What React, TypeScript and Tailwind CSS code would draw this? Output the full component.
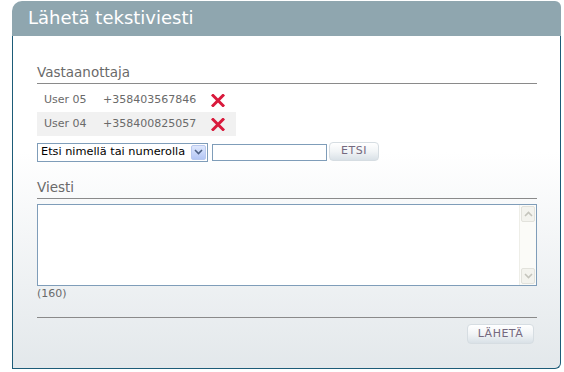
import { useState } from 'react';

const recipients = [
  { name: 'User 05', phone: '+358403567846' },
  { name: 'User 04', phone: '+358400825057' },
];

function RemoveIcon() {
  return (
    <svg width="14" height="13" viewBox="0 0 14 13" className="block">
      <path d="M2 1.5 L12 11.5 M12 1.5 L2 11.5" stroke="#d91a3c" strokeWidth="3" strokeLinecap="square" />
    </svg>
  );
}

function Chevron({ up }: { up?: boolean }) {
  return (
    <svg width="9" height="6" viewBox="0 0 9 6" className="block">
      <path d={up ? 'M1 5 L4.5 1.5 L8 5' : 'M1 1 L4.5 4.5 L8 1'} fill="none" stroke="currentColor" strokeWidth="1.6" />
    </svg>
  );
}

function SoftButton({ label, className }: { label: string; className: string }) {
  return (
    <button
      className={`flex items-center justify-center rounded-[4px] border border-[#d6dde2] bg-gradient-to-b from-[#ffffff] via-[#f1f4f6] to-[#d9e1e7] text-[11px] tracking-[0.5px] text-[#75697f] ${className}`}
    >
      {label}
    </button>
  );
}

export default function App() {
  const [rows] = useState(recipients);

  return (
    <div className="w-[564px] h-[372px] bg-white pt-px pl-[12px] font-['DejaVu_Sans',Verdana,sans-serif]">
      <div className="w-[549px]">
        <div className="h-[35px] bg-[#8fa6af] rounded-tl-[10px] rounded-tr-[6px] pl-[16px] flex items-center">
          <h1 className="text-[18px] text-white leading-none pb-px">Lähetä tekstiviesti</h1>
        </div>
        <div className="h-[333px] border-x border-b border-[#1d5c78] rounded-br-[6px] bg-gradient-to-b from-white from-35% to-[#e3e8eb] pl-[24px] pt-[27px]">
          <div className="w-[500px]">
            <div className="h-[21px] border-b border-[#8a8a8a] text-[13.5px] leading-[19px] text-[#6a6a6a]">
              Vastaanottaja
            </div>

            <div className="mt-[4px] w-[199px]">
              {rows.map((r, i) => (
                <div
                  key={r.phone}
                  className={`h-[24px] flex items-center text-[11px] text-[#6a6a6a] ${i % 2 === 1 ? 'bg-[#f1f1f1]' : ''}`}
                >
                  <span className="pl-[7px] w-[66px]">{r.name}</span>
                  <span className="w-[108px]">{r.phone}</span>
                  <RemoveIcon />
                </div>
              ))}
            </div>

            <div className="mt-[6px] h-[20px] flex items-center">
              <div className="w-[171px] h-[19px] border border-[#7f9db9] bg-white flex items-center justify-between pl-[3px] pr-px">
                <span className="text-[11.3px] text-black leading-none">Etsi nimellä tai numerolla</span>
                <span className="w-[15px] h-[15px] rounded-[2px] border border-[#b9c9ef] bg-gradient-to-b from-[#dfe8fd] to-[#b3c6f5] flex items-center justify-center text-[#4d6185]">
                  <Chevron />
                </span>
              </div>
              <div className="ml-[4px] w-[115px] h-[17px] border border-[#7f9db9] bg-white" />
              <SoftButton label="ETSI" className="ml-[2px] w-[50px] h-[19px] -mt-[2px]" />
            </div>

            <div className="mt-[16px] h-[21px] border-b border-[#8a8a8a] text-[13.5px] leading-[19px] text-[#6a6a6a]">
              Viesti
            </div>

            <div className="mt-[5px] h-[82px] border border-[#7f9db9] bg-white flex justify-end">
              <div className="w-[17px] h-full flex flex-col justify-between bg-[#fbfbf8] border-l border-[#eeeee8] p-px">
                <div className="h-[16px] rounded-[2px] border border-[#e2e2dc] bg-[#f3f3ee] flex items-center justify-center text-[#c4c4bc]">
                  <Chevron up />
                </div>
                <div className="h-[16px] rounded-[2px] border border-[#e2e2dc] bg-[#f3f3ee] flex items-center justify-center text-[#c4c4bc]">
                  <Chevron />
                </div>
              </div>
            </div>

            <div className="h-[16px] text-[11px] leading-[16px] text-[#6a6a6a]">(160)</div>

            <div className="mt-[15px] border-b border-[#8a8a8a]" />

            <div className="mt-[6px] flex justify-end pr-[3px]">
              <SoftButton label="LÄHETÄ" className="w-[67px] h-[20px]" />
            </div>
          </div>
        </div>
      </div>
    </div>
  );
}
